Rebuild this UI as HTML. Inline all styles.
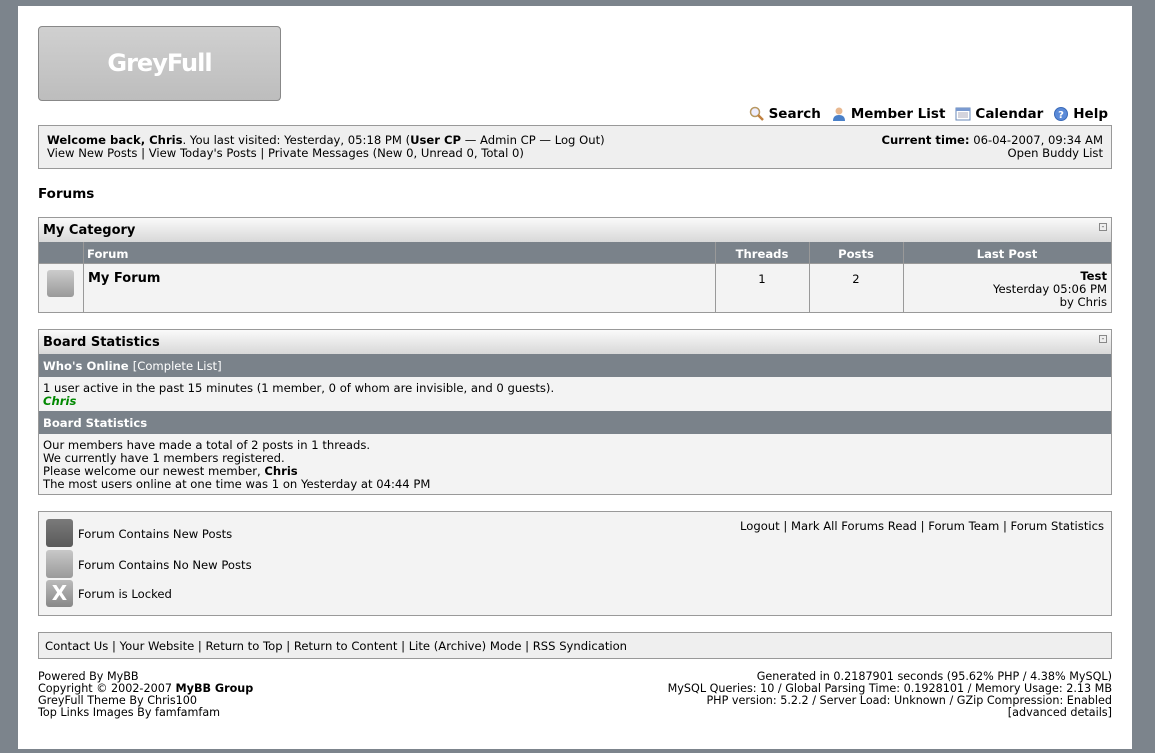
<!DOCTYPE html>
<html><head><meta charset="utf-8"><style>
*{margin:0;padding:0;box-sizing:border-box}
body{width:1155px;height:753px;background:#7c848c;font-family:"DejaVu Sans","Liberation Sans",sans-serif;font-size:11.6px;color:#000;position:relative;overflow:hidden}
.a{position:absolute;white-space:nowrap}
#wrap{position:absolute;left:18px;top:6px;width:1114px;height:743px;background:#fff}
.box{position:absolute;border:1px solid #999}
.thead{background:linear-gradient(#fafafa,#d8d8d8);font-weight:bold;font-size:13px}
.tcat{background:#7a828a;color:#fff;font-weight:bold}
b{font-weight:bold}
.ico{position:absolute;width:27px;height:27px;border-radius:3px}
.col{position:absolute;top:0;bottom:0;border-left:1px solid #999}
.min{position:absolute;width:8px;height:8px;border:1px solid #888;background:#eee;font-size:8px;line-height:5px;text-align:center;color:#555}
</style></head><body>
<div id="wrap"></div>
<div class="a" style="left:38px;top:26px;width:243px;height:75px;border:1px solid #888;border-radius:4px;background:linear-gradient(#d0d0d0,#bdbdbd);color:#fff;font-weight:bold;font-size:24px;text-align:center;line-height:72px;letter-spacing:-1px">GreyFull</div>

<div class="a" style="right:47px;top:106px;font-weight:bold;font-size:13.5px;display:flex;align-items:center;gap:4px">
<svg width="16" height="16"><circle cx="6" cy="6" r="4.5" fill="#eef" stroke="#b89860" stroke-width="1.5"/><path d="M9 9l5 5" stroke="#c08040" stroke-width="2.5"/></svg><span>Search</span>
<svg width="16" height="16" style="margin-left:6px"><circle cx="8" cy="5" r="3.5" fill="#e8b890"/><path d="M2 15q0-6 6-6q6 0 6 6z" fill="#4a80c8"/></svg><span>Member List</span>
<svg width="16" height="16" style="margin-left:6px"><rect x="1" y="2" width="14" height="12" fill="#fff" stroke="#6a8ab8"/><rect x="1" y="2" width="14" height="3" fill="#7a9ad0"/><path d="M3 7h10M3 9h10M3 11h10" stroke="#aab"/></svg><span>Calendar</span>
<svg width="16" height="16" style="margin-left:6px"><circle cx="8" cy="8" r="6.5" fill="#5a8ad8" stroke="#3a6ab8"/><text x="8" y="12" font-size="10" fill="#fff" text-anchor="middle" font-weight="bold">?</text></svg><span>Help</span>
</div>

<div class="box" style="left:38px;top:125px;width:1074px;height:44px;background:#efefef"></div>
<div class="a" style="left:47px;top:134px;line-height:13px"><b>Welcome back, Chris</b>. You last visited: Yesterday, 05:18 PM (<b>User CP</b> — Admin CP — Log Out)<br>View New Posts | View Today's Posts | Private Messages (New 0, Unread 0, Total 0)</div>
<div class="a" style="right:52px;top:134px;line-height:13px;text-align:right"><b>Current time:</b> 06-04-2007, 09:34 AM<br>Open Buddy List</div>

<div class="a" style="left:38px;top:186px;font-weight:bold;font-size:13.5px">Forums</div>

<div class="box" style="left:38px;top:217px;width:1074px;height:96px;background:#f3f3f3">
 <div class="a thead" style="left:0;top:0;width:1072px;height:24px;padding:5px 4px">My Category</div>
 <div class="min" style="right:4px;top:5px">-</div>
 <div class="a tcat" style="left:0;top:24px;width:1072px;height:22px"></div>
 <div class="col" style="left:44px;top:24px"></div>
 <div class="col" style="left:676px;top:24px"></div>
 <div class="col" style="left:770px;top:24px"></div>
 <div class="col" style="left:864px;top:24px"></div>
 <div class="a" style="left:44px;top:24px;width:632px;height:22px;color:#fff;font-weight:bold;padding:5px 4px">Forum</div>
 <div class="a" style="left:676px;top:24px;width:94px;color:#fff;font-weight:bold;padding-top:5px;text-align:center">Threads</div>
 <div class="a" style="left:770px;top:24px;width:94px;color:#fff;font-weight:bold;padding-top:5px;text-align:center">Posts</div>
 <div class="a" style="left:864px;top:24px;width:208px;color:#fff;font-weight:bold;padding-top:5px;text-align:center">Last Post</div>
 <div class="a" style="left:0;top:45px;width:1072px;border-top:1px solid #999"></div>
 <div class="ico" style="left:8px;top:52px;background:linear-gradient(#ccc,#999)"></div>
 <div class="a" style="left:49px;top:53px;font-weight:bold;font-size:13px">My Forum</div>
 <div class="a" style="left:676px;top:54px;width:94px;text-align:center">1</div>
 <div class="a" style="left:770px;top:54px;width:94px;text-align:center">2</div>
 <div class="a" style="right:4px;top:52px;text-align:right;line-height:13px"><b>Test</b><br>Yesterday 05:06 PM<br>by Chris</div>
</div>

<div class="box" style="left:38px;top:329px;width:1074px;height:166px;background:#f3f3f3">
 <div class="a thead" style="left:0;top:0;width:1072px;height:24px;padding:5px 4px">Board Statistics</div>
 <div class="min" style="right:4px;top:5px">-</div>
 <div class="a tcat" style="left:0;top:24px;width:1072px;height:23px;padding:5px 4px">Who's Online <span style="font-weight:normal">[Complete List]</span></div>
 <div class="a" style="left:4px;top:52px;line-height:13px">1 user active in the past 15 minutes (1 member, 0 of whom are invisible, and 0 guests).<br><b style="color:#080;font-style:italic">Chris</b></div>
 <div class="a tcat" style="left:0;top:81px;width:1072px;height:23px;padding:5px 4px">Board Statistics</div>
 <div class="a" style="left:4px;top:109px;line-height:13px">Our members have made a total of 2 posts in 1 threads.<br>We currently have 1 members registered.<br>Please welcome our newest member, <b>Chris</b><br>The most users online at one time was 1 on Yesterday at 04:44 PM</div>
</div>

<div class="box" style="left:38px;top:511px;width:1074px;height:105px;background:#f3f3f3">
 <div class="ico" style="left:7px;top:7px;height:28px;width:27px;background:linear-gradient(#7a7a7a,#5a5a5a)"></div>
 <div class="a" style="left:39px;top:15px">Forum Contains New Posts</div>
 <div class="ico" style="left:7px;top:38px;height:28px;width:27px;background:linear-gradient(#c8c8c8,#9a9a9a)"></div>
 <div class="a" style="left:39px;top:46px">Forum Contains No New Posts</div>
 <div class="ico" style="left:7px;top:68px;height:27px;width:27px;background:linear-gradient(#bbb,#888);color:#fff;font-weight:bold;font-size:20px;text-align:center;line-height:27px">X</div>
 <div class="a" style="left:39px;top:75px">Forum is Locked</div>
 <div class="a" style="right:7px;top:7px">Logout | Mark All Forums Read | Forum Team | Forum Statistics</div>
</div>

<div class="box" style="left:38px;top:632px;width:1074px;height:27px;background:#efefef"></div>
<div class="a" style="left:45px;top:639px">Contact Us | Your Website | Return to Top | Return to Content | Lite (Archive) Mode | RSS Syndication</div>

<div class="a" style="left:38px;top:671px;font-size:11.2px;line-height:12px">Powered By MyBB<br>Copyright © 2002-2007 <b>MyBB Group</b><br>GreyFull Theme By Chris100<br>Top Links Images By famfamfam</div>
<div class="a" style="right:43px;top:671px;font-size:11.2px;line-height:12px;text-align:right">Generated in 0.2187901 seconds (95.62% PHP / 4.38% MySQL)<br>MySQL Queries: 10 / Global Parsing Time: 0.1928101 / Memory Usage: 2.13 MB<br>PHP version: 5.2.2 / Server Load: Unknown / GZip Compression: Enabled<br>[advanced details]</div>
</body></html>
